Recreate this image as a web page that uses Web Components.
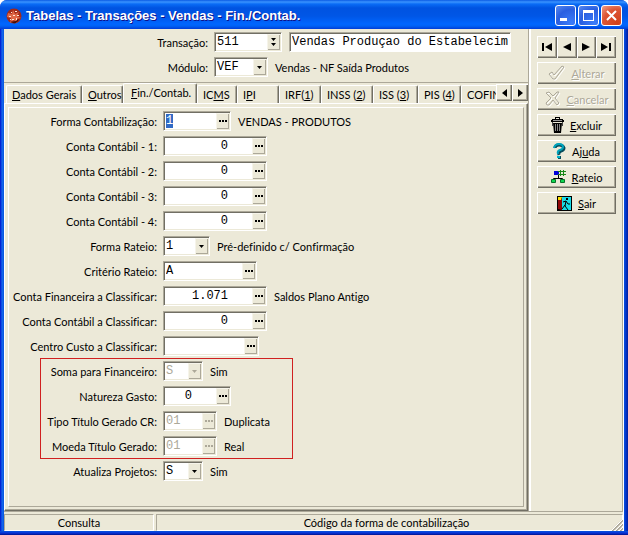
<!DOCTYPE html>
<html lang="pt-BR">
<head>
<meta charset="utf-8">
<title>Tabelas - Transações - Vendas - Fin./Contab.</title>
<style>
  html, body { margin: 0; height: 100%; background: #fff; }
  body {
    --face: #ece9d8; --shade: #aca899; --dark: #716f64; --light: #fff;
    font: 11px/14px Lato, "Liberation Sans", Arial, sans-serif; font-variant-ligatures: none; color: #000;
  }
</style>
</head>
<body>
<app-window heading="Tabelas - Transações - Vendas - Fin./Contab.">
  <header-form slot="main">
    <form-row label="Transação" kind="combo" value="511" width="68" labelwidth="204" extra="Vendas Produçao do Estabelecim"></form-row>
    <form-row label="Módulo" kind="select" value="VEF" width="54" labelwidth="204" note="Vendas - NF Saída Produtos"></form-row>
  </header-form>
  <tab-strip slot="main">
    <tab-item label="_Dados Gerais" width="76"></tab-item>
    <tab-item label="_Outros" width="41"></tab-item>
    <tab-item label="_Fin./Contab." width="74" active></tab-item>
    <tab-item label="IC_MS" width="40"></tab-item>
    <tab-item label="I_PI" width="42"></tab-item>
    <tab-item label="IRF(_1)" width="42"></tab-item>
    <tab-item label="INSS (_2)" width="52"></tab-item>
    <tab-item label="ISS (_3)" width="45"></tab-item>
    <tab-item label="PIS (_4)" width="43"></tab-item>
    <tab-item label="COFINS" width="60"></tab-item>
  </tab-strip>
  <tab-panel slot="main">
    <form-row label="Forma Contabilização" value="1" width="68" note="VENDAS - PRODUTOS" selected></form-row>
    <form-row label="Conta Contábil - 1" value="0" width="104" numeric></form-row>
    <form-row label="Conta Contábil - 2" value="0" width="104" numeric></form-row>
    <form-row label="Conta Contábil - 3" value="0" width="104" numeric></form-row>
    <form-row label="Conta Contábil - 4" value="0" width="104" numeric></form-row>
    <form-row label="Forma Rateio" kind="select" value="1" width="47" note="Pré-definido c/ Confirmação"></form-row>
    <form-row label="Critério Rateio" value="A" width="94"></form-row>
    <form-row label="Conta Financeira a Classificar" value="1.071" width="104" numeric note="Saldos Plano Antigo"></form-row>
    <form-row label="Conta Contábil a Classificar" value="0" width="104" numeric></form-row>
    <form-row label="Centro Custo a Classificar" value="" width="96"></form-row>
    <marked-group>
      <form-row label="Soma para Financeiro" kind="select" value="S" width="40" note="Sim" disabled></form-row>
      <form-row label="Natureza Gasto" value="0" width="68" numeric></form-row>
      <form-row label="Tipo Título Gerado CR" value="01" width="54" note="Duplicata" disabled></form-row>
      <form-row label="Moeda Título Gerado" value="01" width="54" note="Real" disabled></form-row>
    </marked-group>
    <form-row label="Atualiza Projetos" kind="select" value="S" width="40" note="Sim"></form-row>
  </tab-panel>
  <record-nav slot="side"></record-nav>
  <tool-button slot="side" icon="check" label="_Alterar" disabled></tool-button>
  <tool-button slot="side" icon="cross" label="_Cancelar" disabled></tool-button>
  <tool-button slot="side" icon="trash" label="_Excluir"></tool-button>
  <tool-button slot="side" icon="help" label="Aj_uda"></tool-button>
  <tool-button slot="side" icon="tree" label="_Rateio"></tool-button>
  <tool-button slot="side" icon="exit" label="_Sair"></tool-button>
  <status-bar slot="status" mode="Consulta" hint="Código da forma de contabilização"></status-bar>
</app-window>

<script>
const base = `*{box-sizing:border-box}button,input,select{margin:0;padding:0;font:inherit;font-variant-ligatures:none;color:inherit;border:0;border-radius:0;outline:0;appearance:none}svg{display:block}`;
const mnemonic = s => s.replace(/_(.)/, '<u>$1</u>');

class Base extends HTMLElement {
  connectedCallback() {
    if (this.shadowRoot) return;
    this.attachShadow({ mode: 'open' }).innerHTML = `<style>${base}${this.css()}</style>${this.html()}`;
    this.ready();
  }
  a(n, d = '') { return this.getAttribute(n) ?? d; }
  ready() {}
}

customElements.define('app-window', class extends Base {
  css() { return `
    :host{display:flex;flex-direction:column;min-height:100vh;box-sizing:border-box;border-radius:7px 7px 0 0;overflow:hidden;
      background:linear-gradient(90deg,#0019cf 0,#0831d9 1px,#166aee 2px,#0855dd 4px,#0855dd calc(100% - 4px),#0540d8 calc(100% - 3px),#001ea0 100%)}
    header{display:flex;align-items:center;gap:4px;height:29px;padding:2px 6px 0 6px;
      background:linear-gradient(#0b5be4 0,#3a93ff 2px,#0a6cf6 4px,#0053e1 8px,#0056e6 16px,#0066ff 24px,#0062f5 26px,#003dd7 29px)}
    h1{flex:1;margin:0;font:bold 13px/18px "Liberation Sans",Arial,sans-serif;color:#fff;text-shadow:1px 1px #0f1089;white-space:nowrap}
    .ctl{display:flex;gap:2px}
    .ctl button{width:21px;height:21px;border:1px solid #fff;border-radius:3px;background:radial-gradient(circle at 80% 90%,#3c7dfa,#2a5fe0 60%,#5a8bf0)}
    .ctl .x{background:radial-gradient(circle at 80% 90%,#d2401a,#dd5534 60%,#f0a088)}
    .body{flex:1;display:flex;flex-direction:column;margin:0 4px;background:var(--face);border-right:1px solid var(--light)}
    .cols{flex:1;display:flex;border-bottom:1px solid var(--shade)}
    main{flex:1;min-width:0;display:flex;flex-direction:column;border-right:1px solid var(--shade)}
    aside{width:94px;display:flex;flex-direction:column;gap:4px;padding:7px 6px 0 6px;border-left:2px solid var(--light);border-right:1px solid var(--shade)}
    footer{height:4px;background:linear-gradient(#0855dd,#0831d9 50%,#00138c)}`; }
  html() { return `
    <header>
      <svg width="16" height="16" viewBox="0 0 16 16"><circle cx="8" cy="8" r="7.5" fill="#a32a18"/><path d="M2 5l4 1 1-4 2 4 4-2-2 4 4 2-4 1 0 4-3-3-4 3 1-5-4-1z" fill="#e06848"/><path d="M5 4h1v1H5zM9 3h2v1H9zM3 8h2v1H3zM7 7h2v1H7zM11 7h2v1h-2zM6 11h2v1H6zM10 10h1v2h-1zM4 11h1v1H4z" fill="#ffe4d4"/><path d="M3 12q4 4 10-1-2 5-6 4z" fill="#421008"/></svg>
      <h1>${this.a('heading')}</h1>
      <div class="ctl">
        <button aria-label="Minimizar"><svg width="19" height="19"><path d="M4 12h7v3H4z" fill="#fff"/></svg></button>
        <button aria-label="Maximizar"><svg width="19" height="19"><path d="M4 4h11v11H4zM5 7v7h9V7z" fill="#fff" fill-rule="evenodd"/></svg></button>
        <button class="x" aria-label="Fechar"><svg width="19" height="19"><path d="M5 5l9 9M14 5l-9 9" stroke="#fff" stroke-width="2"/></svg></button>
      </div>
    </header>
    <div class="body">
      <div class="cols"><main><slot name="main"></slot></main><aside><slot name="side"></slot></aside></div>
      <slot name="status"></slot>
    </div>
    <footer></footer>`; }
});

customElements.define('header-form', class extends Base {
  css() { return `:host{display:flex;flex-direction:column;gap:5px;padding:3px 0 5px;border-bottom:1px solid var(--shade)}`; }
  html() { return `<slot></slot>`; }
});

const dots = `<svg width="8" height="2"><path d="M0 0h2v2H0zM3 0h2v2H3zM6 0h2v2H6z" fill="currentColor"/></svg>`;
const down = `<svg width="5" height="3"><path d="M0 0h5L2.5 3z" fill="currentColor"/></svg>`;
const twin = `<svg width="5" height="8"><path d="M0 0h5L2.5 3zM0 5h5L2.5 8z" fill="currentColor"/></svg>`;

customElements.define('form-row', class extends Base {
  css() { return `
    :host{display:flex;align-items:center;height:20px;white-space:nowrap}
    label{width:${this.a('labelwidth', '148')}px;padding-top:2px;text-align:right;flex:none}
    .box{display:flex;position:relative;flex:none;width:${this.a('width')}px;height:20px;margin-left:6px;background:#fff;
      border:1px solid;border-color:var(--shade) var(--light) var(--light) var(--shade);box-shadow:inset 1px 1px var(--dark),inset -1px -1px var(--face)}
    input,select{font:12px/14px "Liberation Mono","Courier New",monospace;flex:1;min-width:0;height:18px;background:none;padding:0 2px;color:#000;opacity:1}
    input[numeric]{text-align:right;padding-right:24px}
    .btn{display:flex;align-items:center;justify-content:center;flex:none;width:13px;margin:1px 1px 1px 0;background:var(--face);
      box-shadow:inset 1px 1px #f6f4ea,inset -1px -1px var(--shade)}
    select{padding-right:13px}
    select~.btn{position:absolute;right:0;top:0;bottom:0;pointer-events:none}
    :disabled{color:var(--shade)}
    .box:has(:disabled) .btn{color:var(--shade)}
    .note{padding:2px 0 0 7px}
    .extra{flex:0 1 222px;height:20px;margin-left:7px;border:1px solid;border-color:var(--shade) var(--light) var(--light) var(--shade);box-shadow:inset 1px 1px var(--dark);background:#fff}
    ::selection{background:#316ac5;color:#fff}`; }
  html() {
    const kind = this.a('kind', 'lookup'), off = this.hasAttribute('disabled') ? 'disabled' : '', v = this.a('value');
    const control = kind === 'select'
      ? `<select id="f" ${off}><option>${v}</option></select><span class="btn">${down}</span>`
      : `<input id="f" value="${v}" ${off} ${this.hasAttribute('numeric') ? 'numeric' : ''}><button class="btn" ${off} aria-label="Procurar">${kind === 'combo' ? twin : dots}</button>`;
    return `<label for="f">${this.a('label')}:</label><div class="box">${control}</div>`
      + (this.hasAttribute('extra') ? `<input class="extra" aria-label="Descrição" value="${this.a('extra')}">` : '')
      + (this.hasAttribute('note') ? `<span class="note">${this.a('note')}</span>` : '');
  }
  ready() {
    if (this.hasAttribute('selected')) { const f = this.shadowRoot.getElementById('f'); f.focus(); f.select(); }
  }
});

customElements.define('tab-strip', class extends Base {
  css() { return `
    :host{display:flex;align-items:flex-end;height:20px;padding-left:2px}
    .tabs{flex:1;min-width:0;display:flex;align-items:flex-end;overflow:hidden;height:20px}
    .scroll{display:flex;align-self:flex-start;margin-top:1px}
    .scroll button{width:16px;height:17px;display:grid;place-items:center;background:var(--face);box-shadow:inset 1px 1px var(--light),inset -1px -1px var(--dark),inset -2px -2px var(--shade)}`; }
  html() { return `<div class="tabs" role="tablist"><slot></slot></div><div class="scroll">
    <button aria-label="Abas anteriores"><svg width="5" height="8"><path d="M5 0v8L0 4z"/></svg></button>
    <button aria-label="Próximas abas"><svg width="5" height="8"><path d="M0 0v8l5-4z"/></svg></button></div>`; }
});

customElements.define('tab-item', class extends Base {
  css() { const on = this.hasAttribute('active'); return `
    :host{flex:none;width:${this.a('width')}px}
    button{display:block;width:100%;height:${on ? 20 : 18}px;padding:${on ? '0 0 2px 7px' : '1px 0 0 5px'};text-align:left;white-space:nowrap;background:var(--face);border-radius:2px 2px 0 0;
      border:solid;border-width:1px 1px 0 1px;border-color:var(--light) var(--dark) var(--light) var(--light);box-shadow:inset -1px 0 var(--shade)}`; }
  html() { return `<button role="tab" aria-selected="${this.hasAttribute('active')}">${mnemonic(this.a('label'))}</button>`; }
});

customElements.define('tab-panel', class extends Base {
  css() { return `
    :host{flex:1;display:flex;padding:3px;border:1px solid;border-color:var(--light) var(--dark) var(--dark) var(--light);box-shadow:inset -1px -1px var(--shade)}
    .in{flex:1;display:flex;flex-direction:column;gap:5px;padding:3px 0 24px;border:1px solid;border-color:var(--light) var(--shade) var(--shade) var(--light)}`; }
  html() { return `<div class="in" role="tabpanel"><slot></slot></div>`; }
});

customElements.define('marked-group', class extends Base {
  css() { return `
    :host{display:flex;flex-direction:column;gap:5px;position:relative}
    :host::before{content:"";position:absolute;left:31px;top:-3px;bottom:-3px;width:253px;box-sizing:border-box;border:1px solid #d02020;pointer-events:none}`; }
  html() { return `<slot></slot>`; }
});

const raised = `background:var(--face);box-shadow:inset 1px 1px var(--light),inset -1px -1px var(--dark),inset -2px -2px var(--shade)`;

customElements.define('record-nav', class extends Base {
  css() { return `:host{display:flex}button{flex:1;height:22px;display:grid;place-items:center;${raised}}`; }
  html() { return `
    <button aria-label="Primeiro"><svg width="10" height="8"><path d="M0 0h2v8H0zM10 0v8L3 4z"/></svg></button>
    <button aria-label="Anterior"><svg width="8" height="8"><path d="M8 0v8L0 4z"/></svg></button>
    <button aria-label="Próximo"><svg width="8" height="8"><path d="M0 0v8l8-4z"/></svg></button>
    <button aria-label="Último"><svg width="10" height="8"><path d="M0 0v8l7-4zM8 0h2v8H8z"/></svg></button>`; }
});

const icons = {
  check: `<svg width="17" height="16"><g fill="none"><path d="M2 10l3-2 2 3 8-9 2 1-9 12H6z" stroke="#fff"/><path d="M1 9l3-2 2 3 8-9 2 1-9 12H5z" stroke="#aca899"/></g></svg>`,
  cross: `<svg width="16" height="16"><g fill="none"><path d="M2 3l3-1 4 4 4-4h2l-4 6 4 5-2 2-4-5-4 5H3l-1-2 5-5z" stroke="#fff"/><path d="M1 2l3-1 4 4 4-4h2l-4 6 4 5-2 2-4-5-4 5H2l-1-2 5-5z" stroke="#aca899"/></g></svg>`,
  trash: `<svg width="13" height="16"><path d="M4 0h5v2h3v1h1v2H0V3h1V2h3zM5 1v1h3V1zM2 6h9l-1 10H3z" fill="#000" fill-rule="evenodd"/><path d="M2 3h9v1H2z" fill="#999"/><path d="M4.5 7v7M6.5 7v7M8.5 7v7" stroke="#888"/><path d="M1.5 5v4M11.5 5v4" stroke="#444"/></svg>`,
  help: `<svg width="13" height="16"><path d="M2 5q0-3 4-3t5 3q0 2-3 3t-2 4" fill="none" stroke="#064c5c" stroke-width="3"/><path d="M1 5q1-4 5-4t4 3q0 2-3 3t-2 4" fill="none" stroke="#00a4bc" stroke-width="2"/><path d="M5 13h3v3H5z" fill="#064c5c"/><path d="M4 13h3v2H4z" fill="#00b4cc"/></svg>`,
  tree: `<svg width="15" height="14"><path d="M3 1h5v4H3z" fill="#0000d8"/><path d="M9.5 0v6M12.5 0v6M7 1.5h8M7 4.5h8" stroke="#188818"/><path d="M7.5 5v4M2.5 10V8.5h9V10" fill="none" stroke="#000"/><path d="M.5 9.5h4v3h-4zM9.5 9.5h4v3h-4z" fill="#10d850" stroke="#087028"/></svg>`,
  exit: `<svg width="15" height="15"><path d="M0 0h15v15H0z"/><path d="M5 1h9v13H5z" fill="#18dce8"/><path d="M1 1l4 2v11l-4-1z" fill="#900808"/><path d="M1 1h4l-1 3H1z" fill="#ffe000"/><path d="M9 2h2v2H9z"/><path d="M6 6l3-1 2 3h2M9 5l-1 5 3 4M8 9l-3 4" fill="none" stroke="#000"/></svg>`
};
customElements.define('tool-button', class extends Base {
  css() { return `
    :host{display:block}
    button{width:100%;height:22px;display:flex;align-items:center;justify-content:center;gap:6px;${raised}}
    span{padding-top:2px}
    button:disabled{color:var(--shade);text-shadow:1px 1px var(--light)}`; }
  html() { return `<button ${this.hasAttribute('disabled') ? 'disabled' : ''}>${icons[this.a('icon')]}<span>${mnemonic(this.a('label'))}</span></button>`; }
});

customElements.define('status-bar', class extends Base {
  css() { return `
    :host{display:flex;gap:2px;padding-top:2px;position:relative}
    div{height:17px;line-height:16px;text-align:center;border:1px solid;border-color:var(--shade) var(--light) var(--light) var(--shade)}
    .m{width:150px;flex:none}.h{flex:1;padding-right:6px}
    svg{position:absolute;right:0;bottom:0}`; }
  html() { return `<div class="m">${this.a('mode')}</div><div class="h" role="status">${this.a('hint')}</div>
    <svg width="12" height="12"><path d="M1 12L12 1M5 12l7-7M9 12l3-3" stroke="#aca899" stroke-width="2"/><path d="M0 12L12 0M4 12l8-8M8 12l4-4" stroke="#fff"/></svg>`; }
});
</script>
</body>
</html>
